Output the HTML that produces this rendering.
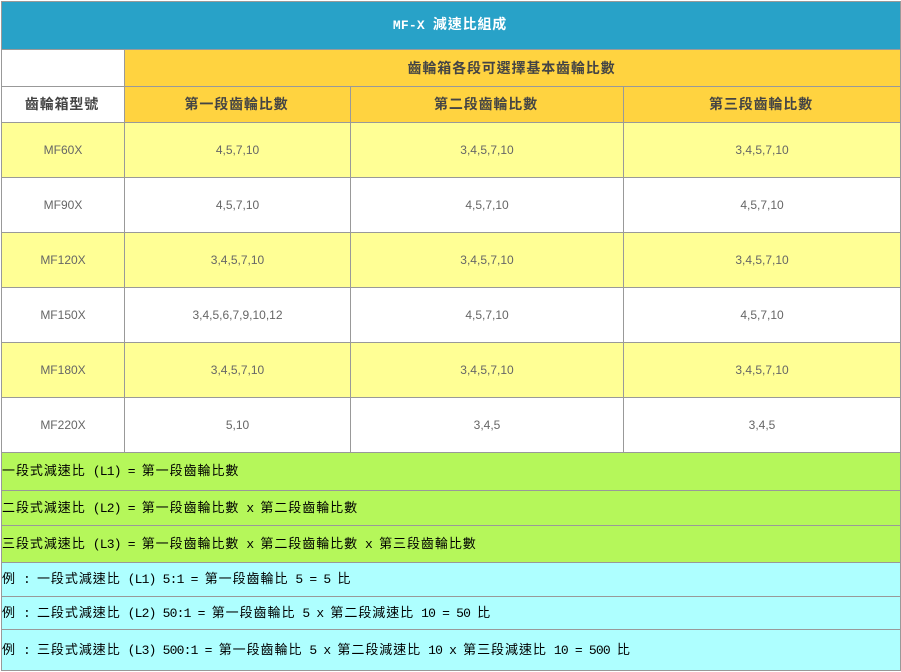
<!DOCTYPE html>
<html lang="zh-Hant">
<head>
<meta charset="utf-8">
<title>MF-X 減速比組成</title>
<style>
html,body{margin:0;padding:0;background:#fff;width:901px;height:672px;overflow:hidden}
table{position:absolute;left:1px;top:1px;border-collapse:collapse;table-layout:fixed;width:899px}
td{border:1px solid #999;padding:0;text-align:center;vertical-align:middle;color:#666;font:12px/14px "Liberation Sans",Arial,sans-serif;overflow:hidden;white-space:nowrap}
.t{background:#28a2c8;color:#fff;font:bold 14px/14px "Liberation Sans","Noto Sans CJK TC",sans-serif;letter-spacing:.85px;padding:0 2px 2px 0}
.t b{font:bold 13px/14px "Liberation Mono",monospace;letter-spacing:.2px}
.h{background:#ffd340;color:#444;font:bold 14px/16px "Liberation Sans","Noto Sans CJK TC",sans-serif;letter-spacing:.85px;padding-right:2px}
.w{background:#fff;color:#444;font:bold 14px/16px "Liberation Sans","Noto Sans CJK TC",sans-serif;letter-spacing:.85px;padding-right:2px}
.u td{padding-bottom:2px}
.y td{background:#ffff95}
.n{text-align:left;color:#000;font:13px/16px "WenQuanYi Zen Hei","Noto Sans CJK TC",sans-serif;letter-spacing:.95px;white-space:pre}
.n b{font:normal 13px/16px "Liberation Mono",monospace;letter-spacing:-.8px}
.g{background:#b5f75a}
.c{background:#aeffff}
.up{padding-bottom:2px}
</style>
</head>
<body>
<table>
<colgroup><col style="width:123px"><col style="width:226px"><col style="width:273px"><col style="width:277px"></colgroup>
<tr style="height:48px"><td class="t" colspan="4"><b>MF-X </b>減速比組成</td></tr>
<tr style="height:37px"><td class="w"></td><td class="h" colspan="3">齒輪箱各段可選擇基本齒輪比數</td></tr>
<tr class="u" style="height:36px"><td class="w">齒輪箱型號</td><td class="h">第一段齒輪比數</td><td class="h">第二段齒輪比數</td><td class="h">第三段齒輪比數</td></tr>
<tr class="y" style="height:55px"><td>MF60X</td><td>4,5,7,10</td><td>3,4,5,7,10</td><td>3,4,5,7,10</td></tr>
<tr style="height:55px"><td>MF90X</td><td>4,5,7,10</td><td>4,5,7,10</td><td>4,5,7,10</td></tr>
<tr class="y" style="height:55px"><td>MF120X</td><td>3,4,5,7,10</td><td>3,4,5,7,10</td><td>3,4,5,7,10</td></tr>
<tr style="height:55px"><td>MF150X</td><td>3,4,5,6,7,9,10,12</td><td>4,5,7,10</td><td>4,5,7,10</td></tr>
<tr class="y" style="height:55px"><td>MF180X</td><td>3,4,5,7,10</td><td>3,4,5,7,10</td><td>3,4,5,7,10</td></tr>
<tr style="height:55px"><td>MF220X</td><td>5,10</td><td>3,4,5</td><td>3,4,5</td></tr>
<tr style="height:38px"><td class="n g up" colspan="4">一段式減速比<b> (L1) = </b>第一段齒輪比數</td></tr>
<tr style="height:35px"><td class="n g" colspan="4">二段式減速比<b> (L2) = </b>第一段齒輪比數<b> x </b>第二段齒輪比數</td></tr>
<tr style="height:37px"><td class="n g" colspan="4">三段式減速比<b> (L3) = </b>第一段齒輪比數<b> x </b>第二段齒輪比數<b> x </b>第三段齒輪比數</td></tr>
<tr style="height:34px"><td class="n c up" colspan="4">例<b> : </b>一段式減速比<b> (L1) 5:1 = </b>第一段齒輪比<b> 5 = 5 </b>比</td></tr>
<tr style="height:33px"><td class="n c" colspan="4">例<b> : </b>二段式減速比<b> (L2) 50:1 = </b>第一段齒輪比<b> 5 x </b>第二段減速比<b> 10 = 50 </b>比</td></tr>
<tr style="height:41px"><td class="n c" colspan="4">例<b> : </b>三段式減速比<b> (L3) 500:1 = </b>第一段齒輪比<b> 5 x </b>第二段減速比<b> 10 x </b>第三段減速比<b> 10 = 500 </b>比</td></tr>
</table>
</body>
</html>
